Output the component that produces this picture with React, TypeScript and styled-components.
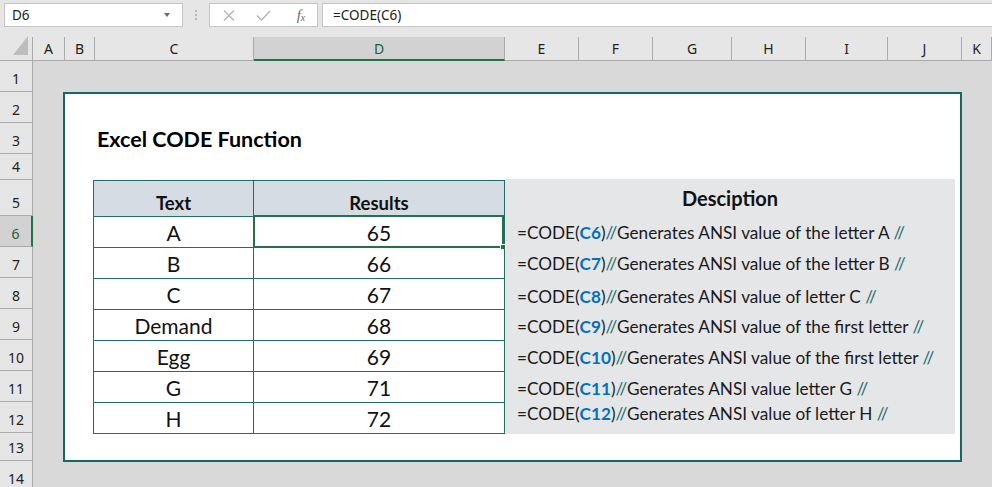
import React from "react";
import styled, { createGlobalStyle } from "styled-components";

const GlobalStyle = createGlobalStyle`
  html, body {
    margin: 0;
    padding: 0;
    background: #d9d9d9;
  }
  * {
    box-sizing: border-box;
  }
`;

interface Col {
  label: string;
  width?: number;
  active?: boolean;
}

const columns: Col[] = [
  { label: "A", width: 32 },
  { label: "B", width: 30 },
  { label: "C", width: 159 },
  { label: "D", width: 251, active: true },
  { label: "E", width: 74 },
  { label: "F", width: 74 },
  { label: "G", width: 79 },
  { label: "H", width: 74 },
  { label: "I", width: 82 },
  { label: "J", width: 74 },
  { label: "K" }
];

const rowHeights = [31, 31, 31, 26, 36, 31, 31, 31, 31, 31, 31, 31, 28, 31];

const data: [string, number][] = [
  ["A", 65],
  ["B", 66],
  ["C", 67],
  ["Demand", 68],
  ["Egg", 69],
  ["G", 71],
  ["H", 72]
];

interface DescLine {
  cell: string;
  note: string;
  gap: number;
}

const descLines: DescLine[] = [
  { cell: "C6", note: "Generates ANSI value of the letter A ", gap: 13 },
  { cell: "C7", note: "Generates ANSI value of the letter B ", gap: 11 },
  { cell: "C8", note: "Generates ANSI value of letter C ", gap: 13 },
  { cell: "C9", note: "Generates ANSI value of the first letter ", gap: 10 },
  { cell: "C10", note: "Generates ANSI value of the first letter ", gap: 11 },
  { cell: "C11", note: "Generates ANSI value letter G ", gap: 11 },
  { cell: "C12", note: "Generates ANSI value of letter H ", gap: 5 }
];

const App = () => {
  return (
    <Screen>
      <GlobalStyle />
      <FormulaBar>
        <NameBox>
          D6
          <DropArrow />
        </NameBox>
        <Grip>
          <Dot />
          <Dot />
          <Dot />
        </Grip>
        <FxBox>
          <Slot $w={38}>
            <svg width="12" height="11" viewBox="0 0 12 11">
              <path d="M1 0.5 L11 10.5 M11 0.5 L1 10.5" stroke="#b4b4b4" strokeWidth="1.3" fill="none" />
            </svg>
          </Slot>
          <Slot $w={30}>
            <svg width="15" height="11" viewBox="0 0 15 11">
              <path d="M1 5.5 L5.5 10 L14 1" stroke="#b4b4b4" strokeWidth="1.4" fill="none" />
            </svg>
          </Slot>
          <Slot $w={46}>
            <Fx>
              f<sub>x</sub>
            </Fx>
          </Slot>
        </FxBox>
        <FormulaInput>=CODE(C6)</FormulaInput>
      </FormulaBar>

      <HeaderRow>
        <Corner>
          <svg width="16" height="20" viewBox="0 0 16 20">
            <polygon points="0,19 15,19 15,0" fill="#bdbdbd" />
          </svg>
        </Corner>
        {columns.map(c => (
          <ColHead key={c.label} $w={c.width} $active={c.active}>
            {c.label}
          </ColHead>
        ))}
      </HeaderRow>

      <Body>
        <RowHeaders>
          {rowHeights.map((h, i) => (
            <RowHead key={i} $h={h} $active={i === 5}>
              {i + 1}
            </RowHead>
          ))}
        </RowHeaders>

        <Sheet>
          <Frame>
            <Title>Excel CODE Function</Title>
            <Content>
              <Table>
                <HeadCell>Text</HeadCell>
                <HeadCell>Results</HeadCell>
                {data.map(([text, code], i) => (
                  <React.Fragment key={text}>
                    <Cell>{text}</Cell>
                    <Cell>
                      {code}
                      {i === 0 && (
                        <Selection>
                          <FillHandle />
                        </Selection>
                      )}
                    </Cell>
                  </React.Fragment>
                ))}
              </Table>
              <Panel>
                <PanelTitle>Desciption</PanelTitle>
                {descLines.map(l => (
                  <Line key={l.cell} $gap={l.gap}>
                    =CODE(<Ref>{l.cell}</Ref>)<Slash>//</Slash>
                    {l.note}
                    <Slash>//</Slash>
                  </Line>
                ))}
              </Panel>
            </Content>
          </Frame>
        </Sheet>
      </Body>
    </Screen>
  );
};

const Screen = styled.div`
  width: 992px;
  height: 487px;
  overflow: hidden;
  display: flex;
  flex-direction: column;
  background: #d9d9d9;
  font-family: "Noto Sans", "Open Sans", sans-serif;
  color: #222;
`;

const FormulaBar = styled.div`
  flex: 0 0 37px;
  display: flex;
  align-items: flex-start;
  padding: 3px 0 0 4px;
  background: #e6e6e6;
`;

const NameBox = styled.div`
  position: relative;
  width: 179px;
  height: 24px;
  background: #fff;
  border: 1px solid #c6c6c6;
  padding-left: 7px;
  font-size: 13.5px;
  line-height: 22px;
  color: #222;
`;

const DropArrow = styled.span`
  position: absolute;
  right: 12px;
  top: 9px;
  border-left: 3.5px solid transparent;
  border-right: 3.5px solid transparent;
  border-top: 4px solid #6a6a6a;
`;

const Grip = styled.div`
  width: 26px;
  height: 24px;
  display: flex;
  flex-direction: column;
  align-items: center;
  justify-content: center;
  gap: 2px;
`;

const Dot = styled.span`
  width: 2px;
  height: 2px;
  background: #b8b8b8;
`;

const FxBox = styled.div`
  width: 109px;
  height: 24px;
  display: flex;
  align-items: center;
  background: #fff;
  border: 1px solid #c6c6c6;
  overflow: hidden;
`;

const Slot = styled.div<{ $w: number }>`
  flex: 0 0 ${p => p.$w}px;
  display: flex;
  align-items: center;
  justify-content: center;
`;

const Fx = styled.span`
  font-family: "Liberation Serif", "DejaVu Serif", serif;
  font-style: italic;
  font-size: 15px;
  color: #6b6b6b;
  line-height: 1;

  sub {
    font-size: 10px;
    vertical-align: -1px;
  }
`;

const FormulaInput = styled.div`
  flex: 1;
  height: 24px;
  margin-left: 4px;
  background: #fff;
  border: 1px solid #c6c6c6;
  border-right: none;
  padding-left: 10px;
  font-size: 13.5px;
  line-height: 22px;
  color: #222;
`;

const HeaderRow = styled.div`
  flex: 0 0 24px;
  display: flex;
  background: #e6e6e6;
`;

const Corner = styled.div`
  width: 33px;
  height: 24px;
  display: flex;
  align-items: flex-end;
  justify-content: flex-end;
  padding: 0 3px 4px 0;
  border-right: 1px solid #ababab;
  border-bottom: 1px solid #ababab;
`;

const ColHead = styled.div<{ $w?: number; $active?: boolean }>`
  ${p => (p.$w ? `width: ${p.$w}px;` : "flex: 1;")}
  height: 24px;
  display: flex;
  align-items: center;
  justify-content: center;
  font-size: 14px;
  color: ${p => (p.$active ? "#1d5c3a" : "#222")};
  background: ${p => (p.$active ? "#d2d2d2" : "#e6e6e6")};
  border-right: 1px solid #ababab;
  border-bottom: ${p => (p.$active ? "2px solid #217346" : "1px solid #ababab")};
`;

const Body = styled.div`
  flex: 1;
  min-height: 0;
  display: flex;
  overflow: hidden;
`;

const RowHeaders = styled.div`
  flex: 0 0 33px;
  display: flex;
  flex-direction: column;
`;

const RowHead = styled.div<{ $h: number; $active?: boolean }>`
  flex: 0 0 ${p => p.$h}px;
  display: flex;
  align-items: flex-end;
  justify-content: center;
  padding-bottom: 3px;
  font-size: 14px;
  line-height: 18px;
  color: ${p => (p.$active ? "#1d5c3a" : "#222")};
  background: ${p => (p.$active ? "#d2d2d2" : "#e6e6e6")};
  border-right: ${p => (p.$active ? "2px solid #217346" : "1px solid #ababab")};
  border-bottom: 1px solid #ababab;
`;

const Sheet = styled.div`
  flex: 1;
  background: #d9d9d9;
  padding: 31px 0 0 30px;
`;

const Frame = styled.div`
  width: 899px;
  height: 370px;
  background: #fff;
  border: 2px solid #146a63;
  padding: 31px 0 0 28px;
`;

const Title = styled.div`
  padding-left: 4px;
  font-family: "Lato", sans-serif;
  font-weight: 700;
  font-size: 21.5px;
  line-height: 28px;
  color: #000;
`;

const Content = styled.div`
  margin-top: 26px;
  display: flex;
  align-items: flex-start;
`;

const Table = styled.div`
  margin-top: 1px;
  display: grid;
  grid-template-columns: 160px 251px;
  grid-auto-rows: 31px;
  grid-template-rows: 36px;
  border-top: 1px solid #1f6e68;
  border-left: 1px solid #1f6e68;
  font-family: "Lato", sans-serif;
  color: #111;
`;

const HeadCell = styled.div`
  display: flex;
  align-items: flex-end;
  justify-content: center;
  padding-bottom: 3px;
  background: #d6dce4;
  border-right: 1px solid #1f6e68;
  border-bottom: 1px solid #1f6e68;
  font-weight: 700;
  font-size: 18.5px;
  line-height: 20px;
`;

const Cell = styled.div`
  position: relative;
  display: flex;
  align-items: center;
  justify-content: center;
  padding-top: 2px;
  border-right: 1px solid #1f6e68;
  border-bottom: 1px solid #1f6e68;
  font-size: 21px;
  line-height: 24px;
`;

const Selection = styled.span`
  position: absolute;
  top: -2px;
  left: -1px;
  right: 0;
  bottom: -1px;
  border: 2px solid #217346;
`;

const FillHandle = styled.span`
  position: absolute;
  right: -4px;
  bottom: -4px;
  width: 6px;
  height: 6px;
  background: #217346;
  border: 1px solid #fff;
`;

const Panel = styled.div`
  width: 450px;
  height: 255px;
  background: #e5e6e8;
  padding: 7px 0 0 12px;
  font-family: "Lato", sans-serif;
  color: #1a1a1a;
`;

const PanelTitle = styled.div`
  padding-right: 12px;
  text-align: center;
  font-weight: 700;
  font-size: 20px;
  line-height: 24px;
  color: #111;
`;

const Line = styled.div<{ $gap: number }>`
  margin-top: ${p => p.$gap}px;
  font-size: 17.2px;
  line-height: 20px;
  white-space: nowrap;
`;

const Ref = styled.b`
  color: #0070c0;
`;

const Slash = styled.span`
  color: #1f6e68;
`;

export default App;
